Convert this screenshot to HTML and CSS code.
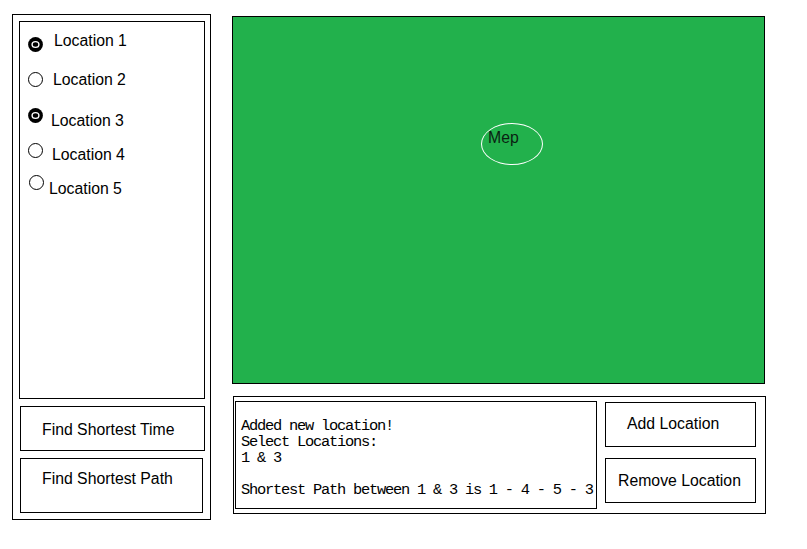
FILE: index.html
```html
<!DOCTYPE html>
<html>
<head>
<meta charset="utf-8">
<link rel="stylesheet" href="styles.css">
</head>
<body>
<div class="sidebar">
  <div class="loc-list">
    <div class="loc-row row1">
      <svg class="radio" width="15" height="15" viewBox="0 0 15 15"><circle cx="7.5" cy="7.5" r="7.4" fill="#000"/><ellipse cx="7.5" cy="7.5" rx="3.4" ry="2.9" fill="none" stroke="#fff" stroke-width="1.4"/></svg>
      <span class="loc-label">Location 1</span>
    </div>
    <div class="loc-row row2">
      <svg class="radio" width="15" height="15" viewBox="0 0 15 15"><circle cx="7.5" cy="7.5" r="7" fill="#fff" stroke="#000" stroke-width="1"/></svg>
      <span class="loc-label">Location 2</span>
    </div>
    <div class="loc-row row3">
      <svg class="radio" width="15" height="15" viewBox="0 0 15 15"><circle cx="7.5" cy="7.5" r="7.4" fill="#000"/><ellipse cx="7.5" cy="7.5" rx="3.4" ry="2.9" fill="none" stroke="#fff" stroke-width="1.4"/></svg>
      <span class="loc-label">Location 3</span>
    </div>
    <div class="loc-row row4">
      <svg class="radio" width="15" height="15" viewBox="0 0 15 15"><circle cx="7.5" cy="7.5" r="7" fill="#fff" stroke="#000" stroke-width="1"/></svg>
      <span class="loc-label">Location 4</span>
    </div>
    <div class="loc-row row5">
      <svg class="radio" width="15" height="15" viewBox="0 0 15 15"><circle cx="7.5" cy="7.5" r="7" fill="#fff" stroke="#000" stroke-width="1"/></svg>
      <span class="loc-label">Location 5</span>
    </div>
  </div>
  <div class="btn btn-time">Find Shortest Time</div>
  <div class="btn btn-path">Find Shortest Path</div>
</div>
<div class="main">
  <div class="map">
    <div class="map-pin">Mep</div>
  </div>
  <div class="console-panel">
    <div class="console">Added new location!
Select Locations:
1 &amp; 3

Shortest Path between 1 &amp; 3 is 1 - 4 - 5 - 3</div>
    <div class="actions">
      <div class="btn btn-add">Add Location</div>
      <div class="btn btn-remove">Remove Location</div>
    </div>
  </div>
</div>
</body>
</html>
```

FILE: styles.css
```css
* { box-sizing: border-box; }

html, body {
  margin: 0;
  background: #fff;
}

body {
  width: 807px;
  height: 549px;
  display: flex;
  align-items: flex-start;
  padding: 14px 0 0 12px;
  font-family: "Liberation Sans", Arial, sans-serif;
  font-size: 15.8px;
  line-height: 18px;
  color: #000;
  overflow: hidden;
}

.sidebar {
  width: 199px;
  height: 506px;
  border: 1px solid #000;
  padding: 6px 0 0 6px;
  display: flex;
  flex-direction: column;
}

.loc-list {
  width: 186px;
  height: 378px;
  border: 1px solid #000;
  display: flex;
  flex-direction: column;
}

.loc-row {
  display: flex;
  align-items: flex-start;
}

.radio { flex: none; display: block; margin-left: 8px; }
.loc-label { white-space: nowrap; }

.row1 { margin-top: 10px; }
.row1 .radio { margin-top: 5px; }
.row1 .loc-label { margin-left: 11px; }

.row2 { margin-top: 19px; }
.row2 .radio { margin-top: 1px; }
.row2 .loc-label { margin-left: 10px; }

.row3 { margin-top: 19px; }
.row3 .loc-label { margin-top: 4px; margin-left: 8px; }

.row4 { margin-top: 13px; }
.row4 .loc-label { margin-top: 3px; margin-left: 9px; }

.row5 { margin-top: 11px; }
.row5 .radio { margin-left: 9px; }
.row5 .loc-label { margin-top: 5px; margin-left: 5px; }

.btn {
  border: 1px solid #000;
  white-space: nowrap;
}

.btn-time {
  margin: 7px 0 0 1px;
  width: 185px;
  height: 45px;
  padding: 14px 0 0 21px;
}

.btn-path {
  margin: 7px 0 0 1px;
  width: 183px;
  height: 55px;
  padding: 11px 0 0 21px;
}

.main {
  margin: 2px 0 0 21px;
  display: flex;
  flex-direction: column;
}

.map {
  position: relative;
  width: 533px;
  height: 368px;
  background: #22b14c;
  border: 1px solid #000;
}

.map-pin {
  position: absolute;
  left: 248px;
  top: 106px;
  width: 62px;
  height: 42px;
  border: 1px solid #fff;
  border-radius: 50%;
  padding: 5px 0 0 6px;
  color: #0a1f12;
}

.console-panel {
  margin: 12px 0 0 1px;
  width: 533px;
  height: 118px;
  border: 1px solid #000;
  padding: 4px 0 0 1px;
  display: flex;
  align-items: flex-start;
}

.console {
  width: 362px;
  height: 108px;
  border: 1px solid #000;
  padding: 16px 0 0 5px;
  font-family: "Liberation Mono", "Courier New", monospace;
  font-size: 15.4px;
  letter-spacing: -1.24px;
  line-height: 16px;
  white-space: pre;
  overflow: hidden;
}

.actions {
  margin-left: 8px;
  margin-top: 1px;
  display: flex;
  flex-direction: column;
}

.btn-add {
  width: 151px;
  height: 45px;
  padding: 12px 0 0 21px;
}

.btn-remove {
  margin-top: 11px;
  width: 151px;
  height: 45px;
  padding: 13px 0 0 12px;
}
```
